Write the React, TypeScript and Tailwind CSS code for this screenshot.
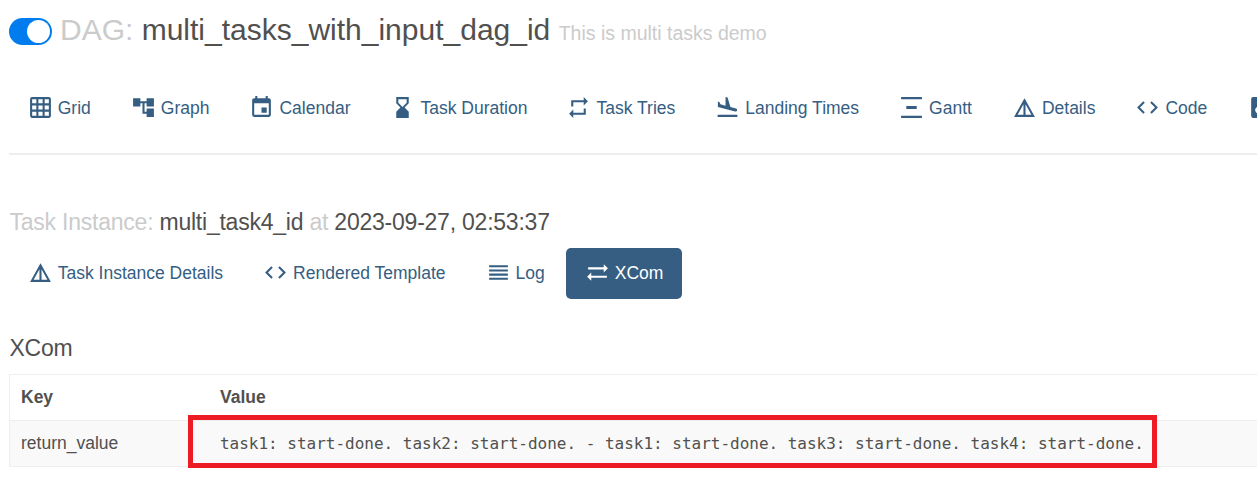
import type { ReactNode } from 'react';
import type { IconType } from 'react-icons';
import {
  MdGridOn, MdAccountTree, MdEvent, MdHourglassBottom, MdRepeat, MdFlightLand,
  MdVerticalDistribute, MdDetails, MdCode, MdPlagiarism, MdReorder,
} from 'react-icons/md';

type Item = { label: string; icon: IconType; active?: boolean; spacing?: string };

const ExchangeArrows: IconType = ({ className }) => (
  <svg viewBox="0 0 24 24" className={className} fill="currentColor">
    <path d="M22 8l-4-4v3H3v2h15v3l4-4zM2 16l4 4v-3h15v-2H6v-3l-4 4z" />
  </svg>
);

const dagTabs: Item[] = [
  { label: 'Grid', icon: MdGridOn },
  { label: 'Graph', icon: MdAccountTree },
  { label: 'Calendar', icon: MdEvent },
  { label: 'Task Duration', icon: MdHourglassBottom, spacing: '-mr-px' },
  { label: 'Task Tries', icon: MdRepeat },
  { label: 'Landing Times', icon: MdFlightLand },
  { label: 'Gantt', icon: MdVerticalDistribute },
  { label: 'Details', icon: MdDetails },
  { label: 'Code', icon: MdCode },
  { label: '', icon: MdPlagiarism },
];

const taskTabs: Item[] = [
  { label: 'Task Instance Details', icon: MdDetails },
  { label: 'Rendered Template', icon: MdCode },
  { label: 'Log', icon: MdReorder },
  { label: 'XCom', icon: ExchangeArrows, active: true },
];

function Tabs({ items }: { items: Item[] }) {
  return (
    <nav className="flex gap-[2.5px]">
      {items.map(({ label, icon: Icon, active, spacing = '' }, i) => (
        <a
          key={i}
          className={`flex h-[51px] shrink-0 items-center gap-[5px] rounded-[5px] px-[18.75px] whitespace-nowrap ${spacing} ${active ? 'bg-[#355e82] text-white' : 'text-[#355e82]'}`}
        >
          <Icon className="mb-[2px] size-[25px] shrink-0" />
          <span>{label}</span>
        </a>
      ))}
    </nav>
  );
}

function Muted({ children }: { children: ReactNode }) {
  return <span className="text-[#cbcbcb]">{children}</span>;
}

export default function App() {
  return (
    <main className="h-[483px] w-full overflow-hidden bg-white pl-[9px] font-['Liberation_Sans',Arial,sans-serif] text-[17.5px] leading-[25px] text-[#51504f]">
      <header className="flex h-[60px] items-center">
        <div className="mt-[3px] flex h-[27px] w-[43px] shrink-0 items-center justify-end rounded-full bg-[#017cee] pr-[2px]">
          <div className="size-[23px] rounded-full bg-white" />
        </div>
        <h1 className="mt-[2px] ml-[8px] text-[30px] leading-[33px] whitespace-nowrap">
          <Muted>DAG:</Muted> multi_tasks_with_input_dag_id{' '}
          <span className="text-[19.5px] text-[#cbcbcb]">This is multi tasks demo</span>
        </h1>
      </header>
      <div className="mt-[23px]"><Tabs items={dagTabs} /></div>
      <hr className="mt-[19px] border-0 border-t-2 border-[#eeeeee]" />
      <h2 className="mt-[54px] ml-[0.5px] h-[26px] text-[23px] leading-[26px] tracking-[-0.23px] whitespace-nowrap">
        <Muted>Task Instance:</Muted> multi_task4_id <Muted>at</Muted> 2023-09-27, 02:53:37
      </h2>
      <div className="mt-[13px]"><Tabs items={taskTabs} /></div>
      <h3 className="mt-[36px] ml-[0.5px] h-[26px] text-[23px] leading-[26px] tracking-[-0.23px]">XCom</h3>
      <section className="mt-[13px] border-t border-l border-[#eeeeee]">
        <div className="flex h-[45px] items-center font-bold">
          <div className="w-[178px] pl-[11px]">Key</div>
          <div className="pl-[32px]">Value</div>
        </div>
        <div className="flex h-[47px] items-center border-y border-[#eeeeee] bg-[#f9f9f9]">
          <div className="w-[178px] shrink-0 pl-[11px]">return_value</div>
          <div className="-mt-[4px] flex h-[53px] w-[969px] shrink-0 items-center border-5 border-[#ed1c24] pt-[3px] pl-[27px] font-['DejaVu_Sans_Mono',Consolas,monospace] text-[16px] tracking-[-0.01px] whitespace-pre">
            task1: start-done. task2: start-done. - task1: start-done. task3: start-done. task4: start-done.
          </div>
        </div>
      </section>
    </main>
  );
}
